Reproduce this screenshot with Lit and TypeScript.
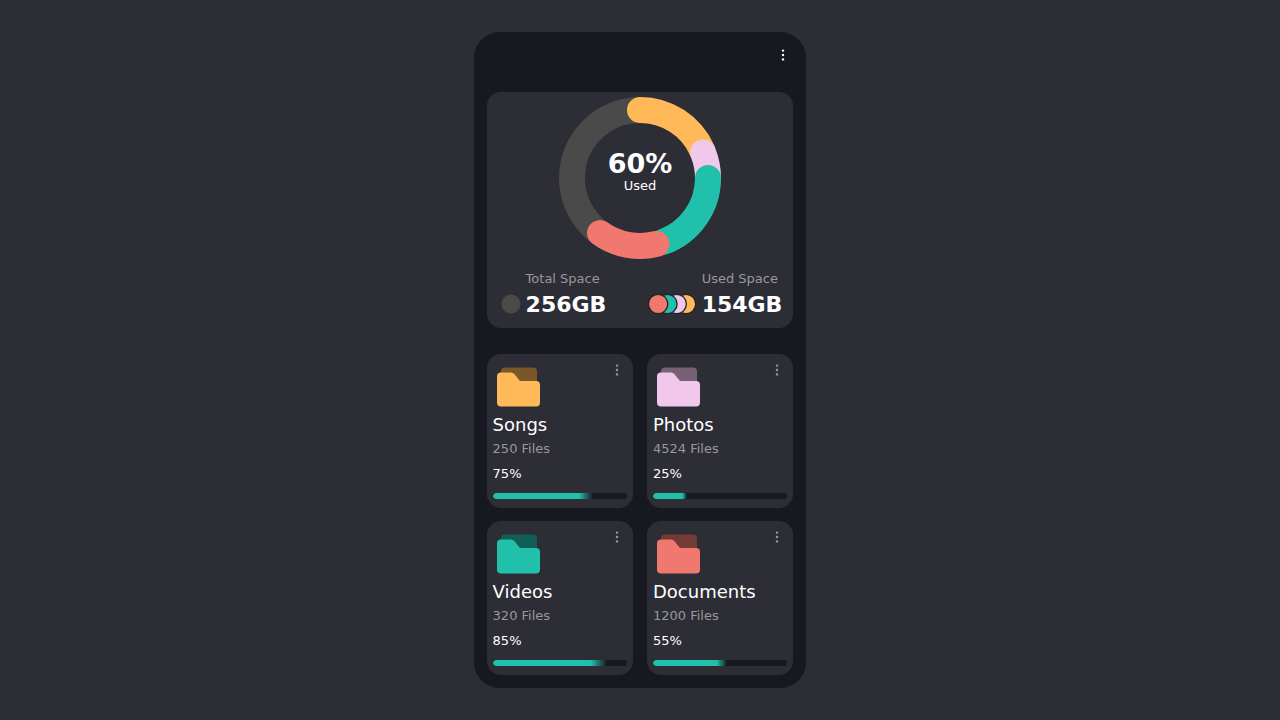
import { LitElement, html, css, svg } from "lit";
import { customElement, property } from "lit/decorators.js";

interface Folder {
  name: string;
  files: number;
  percent: number;
  tone: string;
}

const FOLDERS: Folder[] = [
  { name: "Songs", files: 250, percent: 75, tone: "orange" },
  { name: "Photos", files: 4524, percent: 25, tone: "pink" },
  { name: "Videos", files: 320, percent: 85, tone: "teal" },
  { name: "Documents", files: 1200, percent: 55, tone: "red" },
];

const RADIUS = 68;

// Start and end of each usage arc, in degrees clockwise from the top.
const ARCS = [
  { tone: "orange", from: 0, to: 66 },
  { tone: "pink", from: 68, to: 90 },
  { tone: "teal", from: 90, to: 160 },
  { tone: "red", from: 166, to: 216 },
];

function arcPath(from: number, to: number): string {
  const point = (deg: number) => {
    const a = ((deg - 90) * Math.PI) / 180;
    return `${(RADIUS * Math.cos(a)).toFixed(2)} ${(RADIUS * Math.sin(a)).toFixed(2)}`;
  };
  return `M${point(from)}A${RADIUS} ${RADIUS} 0 0 1 ${point(to)}`;
}

const tones = css`
  .orange {
    color: #ffb959;
    --back: #7a5729;
  }
  .pink {
    color: #f1c8ec;
    --back: #786174;
  }
  .teal {
    color: #20c0ab;
    --back: #135e54;
  }
  .red {
    color: #f0786e;
    --back: #733b36;
  }
`;

@customElement("more-button")
class MoreButton extends LitElement {
  @property() label = "More";

  static styles = css`
    :host {
      display: block;
    }
    .more {
      display: block;
      padding: 0;
      border: 0;
      background: none;
      color: inherit;
      cursor: pointer;
    }
    .dots {
      display: block;
      fill: currentColor;
    }
  `;

  render() {
    return html`
      <button class="more" type="button" aria-label=${this.label}>
        <svg class="dots" width="20" height="20" viewBox="0 0 20 20">
          <circle cx="10" cy="5.600" r="1.200" />
          <circle cx="10" cy="10" r="1.200" />
          <circle cx="10" cy="14.400" r="1.200" />
        </svg>
      </button>
    `;
  }
}

@customElement("usage-ring")
class UsageRing extends LitElement {
  @property({ type: Number }) percent = 0;

  static styles = [
    tones,
    css`
      :host {
        display: grid;
        justify-items: center;
        align-items: center;
      }
      .ring,
      .caption {
        grid-area: 1 / 1;
      }
      .ring {
        display: block;
        fill: none;
        stroke-width: 26;
      }
      .rest {
        stroke: #4a4a4a;
      }
      .arc {
        stroke: currentColor;
        stroke-linecap: round;
      }
      .caption {
        text-align: center;
        padding-bottom: 14px;
      }
      .value {
        font-size: 27px;
        line-height: 30px;
        font-weight: 700;
      }
      .note {
        font-size: 13px;
        line-height: 14px;
      }
    `,
  ];

  render() {
    return html`
      <svg class="ring" width="162" height="162" viewBox="-81 -81 162 162" aria-hidden="true">
        <circle class="rest" r=${RADIUS} />
        ${ARCS.map((a) => svg`<path class="arc ${a.tone}" d=${arcPath(a.from, a.to)} />`)}
      </svg>
      <div class="caption">
        <div class="value">${this.percent}%</div>
        <div class="note">Used</div>
      </div>
    `;
  }
}

@customElement("folder-card")
class FolderCard extends LitElement {
  @property({ attribute: false }) folder!: Folder;

  static styles = [
    tones,
    css`
      :host {
        display: block;
        padding: 6px;
        border-radius: 14px;
        background: #2d2d35;
      }
      .top {
        display: flex;
        justify-content: space-between;
        align-items: flex-start;
      }
      .folder {
        display: block;
        margin: 4px 0;
      }
      .back {
        fill: var(--back);
      }
      .front {
        fill: currentColor;
      }
      .more {
        color: #9b9b9e;
      }
      .name {
        margin: 0;
        font-size: 18px;
        line-height: 22px;
        font-weight: 400;
      }
      .files,
      .percent {
        margin: 0;
        font-size: 13px;
        line-height: 25px;
      }
      .files {
        color: #98989b;
      }
      .bar {
        display: block;
        appearance: none;
        width: 100%;
        height: 6px;
        margin: 7px 0 3px;
        border: 0;
        border-radius: 3px;
        overflow: hidden;
        background: #181920;
      }
      .bar::-webkit-progress-bar {
        background: #181920;
      }
      .bar::-webkit-progress-value {
        height: 5px;
        border-radius: 3px;
        background: linear-gradient(to right, #20c0ab 86%, #181920);
      }
    `,
  ];

  render() {
    const f = this.folder;
    return html`
      <div class="top">
        <svg class="folder ${f.tone}" width="52" height="46" viewBox="0 0 52 46" aria-hidden="true">
          <path class="back" d="M8 7.500Q8 3.500 12 3.500H40Q44 3.500 44 7.500V20H8Z" />
          <path
            class="front"
            d="M4 12.500Q4 8.500 8 8.500H18Q20 8.500 21.300 10L27 17H43Q47 17 47 21V38.500Q47 42.500 43 42.500H8Q4 42.500 4 38.500Z"
          />
        </svg>
        <more-button class="more" label="${f.name} options"></more-button>
      </div>
      <h2 class="name">${f.name}</h2>
      <p class="files">${f.files} Files</p>
      <p class="percent">${f.percent}%</p>
      <progress class="bar" max="100" value=${f.percent} aria-label=${f.name}></progress>
    `;
  }
}

@customElement("app-root")
class AppRoot extends LitElement {
  static styles = [
    tones,
    css`
      :host {
        display: flex;
        justify-content: center;
        align-items: center;
        min-height: 100vh;
        background: #2d2d35;
        color: #fff;
        font-family: "DejaVu Sans", sans-serif;
      }
      .phone {
        box-sizing: border-box;
        width: 26vw;
        min-width: 320px;
        padding: 13px;
        border-radius: 26px;
        background: #181920;
      }
      .header {
        display: flex;
        justify-content: flex-end;
        padding-bottom: 27px;
      }
      .summary {
        padding: 5px 0 9px;
        border-radius: 14px;
        background: #2d2d35;
      }
      .totals {
        display: flex;
        justify-content: space-between;
        padding: 8px 11px 0 14px;
      }
      .total {
        display: grid;
        grid-template-columns: auto auto;
        column-gap: 5px;
        align-items: center;
      }
      .label {
        grid-column: 2;
        font-size: 13px;
        line-height: 24px;
        color: #98989b;
      }
      .amount {
        font-size: 22px;
        line-height: 28px;
        font-weight: 700;
      }
      .swatches {
        display: block;
        padding-bottom: 2px;
      }
      .swatch {
        fill: currentColor;
        stroke: #22222a;
        stroke-width: 1.3;
      }
      .free {
        fill: #4a4a4a;
      }
      .folders {
        display: grid;
        grid-template-columns: 1fr 1fr;
        gap: 13px 14px;
        padding-top: 26px;
      }
    `,
  ];

  render() {
    const used = ["orange", "pink", "teal", "red"];
    return html`
      <main class="phone">
        <header class="header"><more-button label="Menu"></more-button></header>
        <section class="summary">
          <usage-ring percent="60"></usage-ring>
          <div class="totals">
            <div class="total">
              <span class="label">Total Space</span>
              <svg class="swatches" width="20" height="20" viewBox="0 0 20 20" aria-hidden="true">
                <circle class="free" cx="10" cy="10" r="9.500" />
              </svg>
              <span class="amount">256GB</span>
            </div>
            <div class="total">
              <span class="label">Used Space</span>
              <svg class="swatches" width="49" height="20" viewBox="0 0 49 20" aria-hidden="true">
                ${used.map((tone, i) => svg`<circle class="swatch ${tone}" cx=${38 - i * 9.3} cy="10" r="9.700" />`)}
              </svg>
              <span class="amount">154GB</span>
            </div>
          </div>
        </section>
        <section class="folders">
          ${FOLDERS.map((f) => html`<folder-card .folder=${f}></folder-card>`)}
        </section>
      </main>
    `;
  }
}
